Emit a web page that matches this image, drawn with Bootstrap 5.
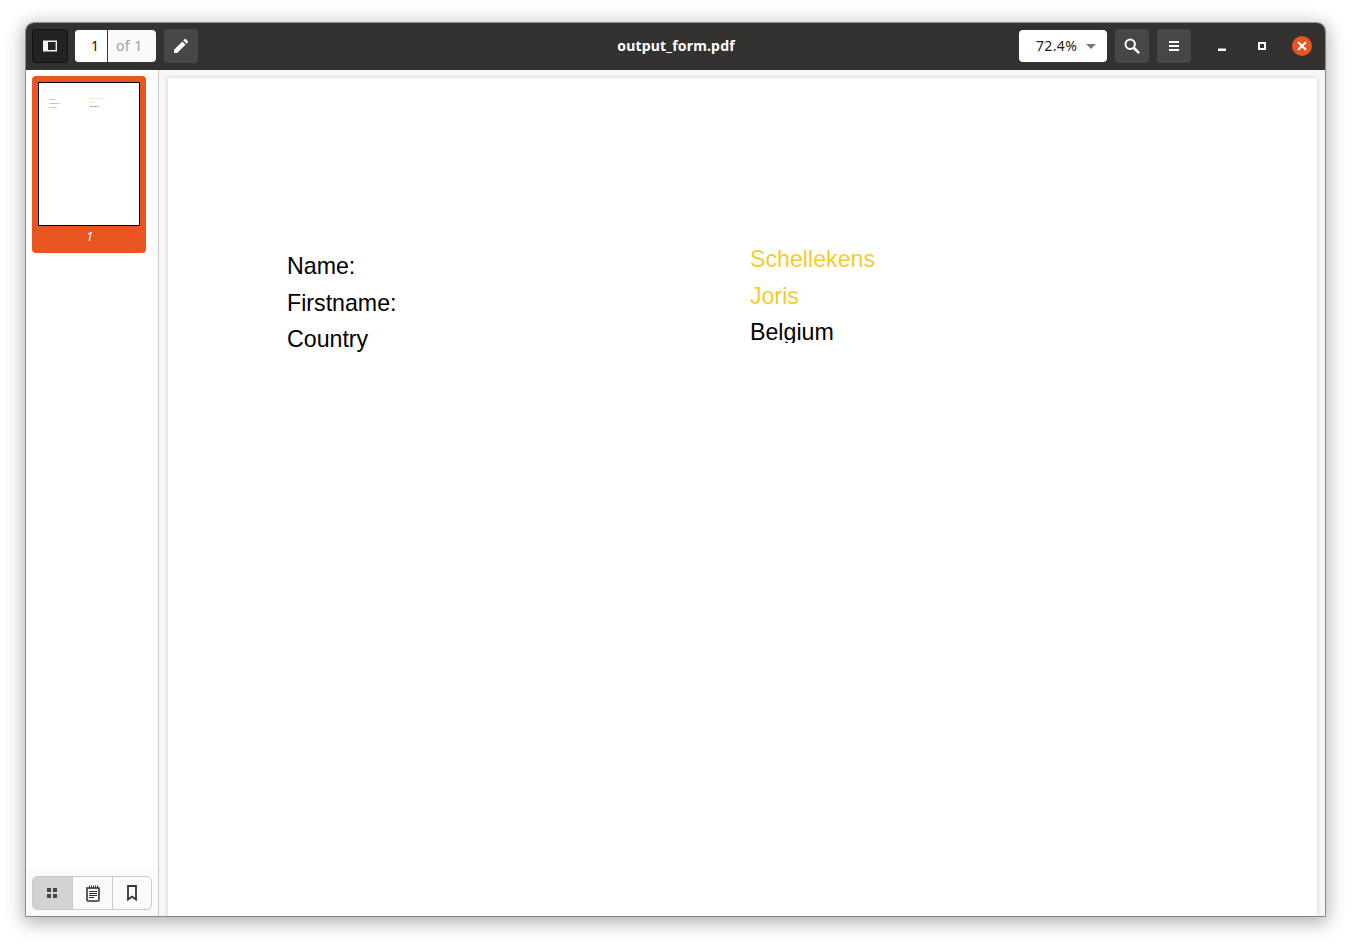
<!DOCTYPE html>
<html lang="en">
<head>
    <meta charset="UTF-8">
    <meta name="viewport" content="width=device-width, initial-scale=1.0">
    <title>output_form.pdf</title>
    <link href="https://cdn.jsdelivr.net/npm/bootstrap@5.3.0/dist/css/bootstrap.min.css" rel="stylesheet">
    <style>
        body { background: #fff; padding: 23px 0 0 26px; font-family: "Noto Sans", "Liberation Sans", sans-serif; overflow: hidden; height: 945px; }
        .app-window { width: 1299px; height: 893px; border-radius: 8px 8px 0 0; box-shadow: 0 0 0 1px rgba(0,0,0,.34), 0 4px 18px 3px rgba(0,0,0,.3); overflow: hidden; }
        .head-bar { height: 47px; background: #333231; padding: 6px 3px 0 6px; display: grid; grid-template-columns: 1fr auto 1fr; align-items: start; }
        .head-title { color: #fff; font-weight: 700; font-size: 14px; line-height: 34px; letter-spacing: .18px; margin-right: 2px; }
        .tool-btn { width: 34px; height: 34px; background: #484746; border-radius: 4px; padding: 0; border: 0; }
        .tool-btn.on { width: 36px; background: #222; border: 1px solid #111; }
        .page-box { width: 81px; height: 32px; margin: 1px 8px 0 7px; background: #fafafa; border-radius: 4px; overflow: hidden; font-size: 14px; line-height: 32px; }
        .page-num { width: 33px; background: #fff; color: #111; text-align: right; padding-right: 8px; border-right: 1px solid #333; }
        .page-of { color: #a0a0a0; padding-left: 8px; letter-spacing: .4px; }
        .zoom-box { width: 88px; height: 32px; margin-top: 1px; background: #fff; border-radius: 4px; font-size: 14px; line-height: 32px; color: #222; padding-left: 17px; letter-spacing: .35px; }
        .zoom-caret { border-left: 5px solid transparent; border-right: 5px solid transparent; border-top: 5px solid #777; margin-left: 9px; }
        .win-group { margin-left: 11px; }
        .win-btn { width: 40px; height: 34px; }
        .side-pane { width: 133px; background: #fff; border-right: 1px solid #cdc9c5; }
        .thumb-card { width: 114px; height: 177px; margin: 6px 0 0 6px; background: #e95420; border-radius: 4px; padding: 6px 6px 0; }
        .thumb-page { width: 102px; height: 144px; background: #fff; border: 1px solid #000; padding: 11px 0 0 10px; font-family: "Liberation Sans", sans-serif; font-size: 2.4px; line-height: 3.9px; }
        .thumb-col { width: 41px; color: #666; }
        .thumb-label { color: #fff; font-style: italic; font-size: 13px; line-height: 22px; text-align: center; padding-left: 1px; margin-top: -1px; }
        .side-foot { background: #fafafa; padding: 6px 6px 6px; }
        .seg-group { width: 120px; height: 34px; border: 1px solid #cdc9c5; border-radius: 5px; overflow: hidden; background: #fafafa; }
        .seg-btn { width: 40px; border: 0; padding: 0; background: transparent; border-left: 1px solid #cdc9c5; }
        .seg-btn.first { border-left: 0; background: #d2d2d2; }
        .view-pane { background: #f6f6f6; padding: 8px 8px 0 9px; }
        .doc-page { background: #fff; height: 100%; box-shadow: 0 0 4px rgba(0,0,0,.18); padding: 163px 0 0 119px; font-family: "Liberation Sans", Arial, sans-serif; font-size: 23.2px; color: #000; }
        .doc-left { width: 463px; padding-top: 7px; }
        .doc-row { height: 36.6px; line-height: 36px; }
        .doc-row.cut { height: 29px; line-height: 36px; overflow: hidden; }
        .doc-gold { color: #f5cc2d; }
    </style>
</head>
<body>
    <div class="app-window d-flex flex-column">
        <!-- header bar -->
        <div class="head-bar">
            <div class="d-flex">
                <button class="tool-btn on d-flex align-items-center justify-content-center">
                    <svg width="14" height="12" viewBox="0 0 14 12"><path fill="#f2f2f2" fill-rule="evenodd" d="M0 .5h14v11H0zM5 2v8h7.600V2z"/></svg>
                </button>
                <div class="page-box d-flex">
                    <div class="page-num">1</div>
                    <div class="page-of">of 1</div>
                </div>
                <button class="tool-btn d-flex align-items-center justify-content-center">
                    <svg width="14" height="14" viewBox="0 0 14 14"><path fill="#fff" d="M0 14v-3.200L8.300 2.500l3.200 3.200L3.200 14zM9.300 1.500 10.500.3c.4-.4 1-.4 1.400 0l1.800 1.800c.4.4.4 1 0 1.400l-1.200 1.200z"/></svg>
                </button>
            </div>
            <div class="head-title">output_form.pdf</div>
            <div class="d-flex justify-content-end">
                <div class="zoom-box d-flex align-items-center">
                    <span>72.4%</span><span class="zoom-caret"></span>
                </div>
                <button class="tool-btn d-flex align-items-center justify-content-center ms-2">
                    <svg width="16" height="16" viewBox="0 0 16 16"><circle cx="6.200" cy="6.200" r="4.700" fill="none" stroke="#fff" stroke-width="2"/><path stroke="#fff" stroke-width="2.600" stroke-linecap="round" d="M10 10l4.300 4.300"/></svg>
                </button>
                <button class="tool-btn d-flex align-items-center justify-content-center ms-2">
                    <svg width="12" height="12" viewBox="0 0 12 12"><path fill="#fff" d="M1 1h10v2H1zM1 5h10v2H1zM1 9h10v2H1z"/></svg>
                </button>
                <div class="win-btn win-group d-flex align-items-center justify-content-center">
                    <svg width="10" height="10" viewBox="0 0 10 10"><path fill="#fff" d="M1 7.500h8V10H1z"/></svg>
                </div>
                <div class="win-btn d-flex align-items-center justify-content-center">
                    <svg width="10" height="10" viewBox="0 0 10 10"><path fill="#fff" fill-rule="evenodd" d="M1 1h8v8H1zM3 3v4h4V3z"/></svg>
                </div>
                <div class="win-btn d-flex align-items-center justify-content-center">
                    <svg width="20" height="20" viewBox="0 0 20 20"><circle cx="10" cy="10" r="10" fill="#e95420"/><path stroke="#fff" stroke-width="2.200" stroke-linecap="round" d="M6.700 6.700l6.600 6.600M13.300 6.700l-6.600 6.600"/></svg>
                </div>
            </div>
        </div>

        <div class="d-flex flex-grow-1" style="min-height:0">
            <!-- thumbnail sidebar -->
            <div class="side-pane d-flex flex-column">
                <div class="flex-grow-1">
                    <div class="thumb-card">
                        <div class="thumb-page d-flex">
                            <div class="thumb-col pt-1">
                                <div>Name:</div>
                                <div>Firstname:</div>
                                <div>Country</div>
                            </div>
                            <div class="pt-1" style="margin-top:-1px">
                                <div class="doc-gold">Schellekens</div>
                                <div class="doc-gold">Joris</div>
                                <div>Belgium</div>
                            </div>
                        </div>
                        <div class="thumb-label">1</div>
                    </div>
                </div>
                <div class="side-foot">
                    <div class="seg-group d-flex">
                        <button class="seg-btn first d-flex align-items-center justify-content-center">
                            <svg width="12" height="12" viewBox="1 0 12 12"><path fill="#444" d="M1 1h4v4H1zM7 1h4v4H7zM1 7h4v4H1zM7 7h4v4H7z"/></svg>
                        </button>
                        <button class="seg-btn d-flex align-items-center justify-content-center">
                            <svg width="14" height="17" viewBox="0 0 14 17"><path fill="none" stroke="#333" stroke-width="1.600" d="M1 3h12v12q0 1-1 1H2q-1 0-1-1z"/><path stroke="#333" stroke-width="1" d="M3.500 3.500V.5M5.500 3.500V.5M7.500 3.500V.5M9.500 3.500V.5M11.500 3.500V.5M3 6.500h8M3 8.500h8M3 10.500h8M3 12.500h5"/></svg>
                        </button>
                        <button class="seg-btn d-flex align-items-center justify-content-center">
                            <svg width="12" height="16" viewBox="0 0 12 16"><path fill="none" stroke="#333" stroke-width="1.800" d="M2 1h8v13.500L6 11.500 2 14.500z"/></svg>
                        </button>
                    </div>
                </div>
            </div>
            <!-- document view -->
            <div class="view-pane flex-grow-1">
                <div class="doc-page d-flex">
                    <div class="doc-left">
                        <div class="doc-row">Name:</div>
                        <div class="doc-row">Firstname:</div>
                        <div class="doc-row">Country</div>
                    </div>
                    <div>
                        <div class="doc-row doc-gold">Schellekens</div>
                        <div class="doc-row doc-gold">Joris</div>
                        <div class="doc-row cut">Belgium</div>
                    </div>
                </div>
            </div>
        </div>
    </div>
    <script src="https://cdn.jsdelivr.net/npm/bootstrap@5.3.0/dist/js/bootstrap.bundle.min.js"></script>
</body>
</html>
